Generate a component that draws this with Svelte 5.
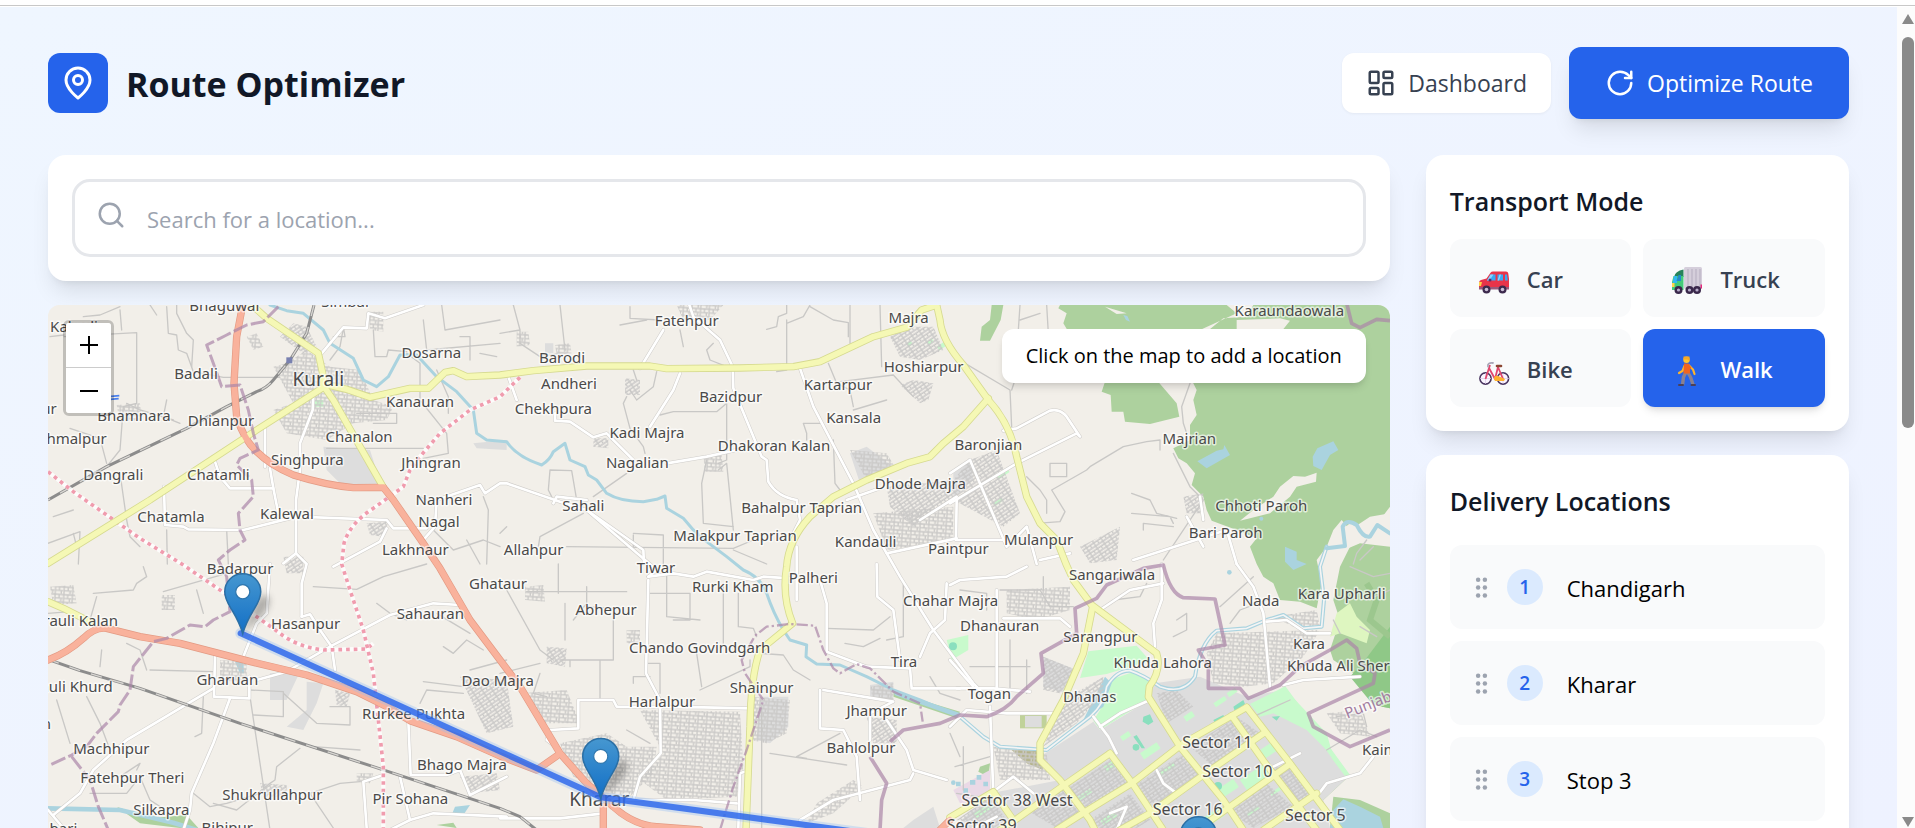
<script>
  let search = $state('');
  let mode = $state('Walk');
  const modes = ['Car', 'Truck', 'Bike', 'Walk'];
  const stops = ['Chandigarh', 'Kharar', 'Stop 3'];

  // Map geometry is in tile units, three per screen pixel.
  const primary = [
    'M608 15L590 110L582 250L590 350Q612 420 650 455Q690 495 760 525Q860 556 940 563L1030 562L1060 600L1150 730L1200 805L1290 960L1380 1080L1440 1160L1560 1360L1640 1450L1720 1520Q1780 1575 1850 1580L1980 1590',
    'M24 1080Q80 1060 130 1015Q165 980 200 985L300 1010L420 1030L620 1082L800 1125L950 1175L1050 1225L1110 1262L1250 1310L1380 1368L1490 1410L1550 1368',
    'M1690 1520L1690 1600', 'M2690 1600L2730 1560'
  ];
  const secondary = [
    'M630 10L680 55L835 160L848 220L852 260L880 300L1030 562',
    'M24 790L330 600L650 390L850 262',
    'M850 252L920 268L990 292L1110 265L1165 265L1215 217L1240 212L1280 230L1380 225L1480 212L1640 198L1830 198L1880 206L2100 204L2260 200L2340 185L2500 110L2600 82L2645 30L2690 15L2700 60Q2705 120 2770 195L2845 300Q2910 370 2930 470L2960 590L3000 670L3050 720L3078 792L3100 840L3155 915L3350 1060Q3365 1110 3328 1160L3325 1190L3420 1340L3550 1500L3610 1590',
    'M2845 295L2770 380L2710 430L2670 470L2600 490L2480 540L2380 590L2310 650Q2245 720 2240 800Q2225 890 2258 970L2160 1050Q2132 1130 2130 1280L2118 1590',
    'M3158 920L3130 1060L3070 1200L3000 1330L3000 1380L3060 1440L3150 1560L3165 1590',
    'M3620 1222L3430 1330L3275 1450L3120 1545L3050 1590',
    'M3210 1360L3070 1457L2930 1557L2880 1590', 'M3210 1360L3275 1447L3370 1590',
    'M3620 1222L3750 1390L3900 1590', 'M3575 1247L3670 1382L3770 1512L3830 1590',
    'M3675 1297L3480 1432L3330 1540L3240 1590', 'M3750 1392L3560 1527L3470 1590',
    'M3830 1480L3670 1590', 'M2730 1552L2860 1475L2920 1560', 'M24 905L70 925L150 965'
  ];
  const tertiary = [
    'M1150 15L1035 55L985 40L980 85L910 82L845 160', 'M820 280L818 330L780 430L780 510L768 600L768 760L730 790',
    'M768 760L800 792L785 850L785 950', 'M372 560L375 675L430 680L445 688L610 690L770 650L1040 660L1060 685L1160 685',
    'M520 470L540 530L570 565L700 565L690 505', 'M700 565L715 640', 'M675 370L675 500', 'M1150 720L1185 680L1190 600L1320 555L1335 580L1380 550L1400 550L1560 605L1640 630L1810 750L1812 792',
    'M1040 685L1020 725L880 800', 'M690 792L680 940L650 970L610 1070', 'M785 950L810 943L840 990L875 1040L885 1110',
    'M650 1140L740 1115L870 1040L1050 945L1180 910L1260 915', 'M525 1070L522 1190L628 1195L628 1130', 'M520 1165L260 1320L160 1410L120 1480L40 1545',
    'M570 1195L520 1330L455 1480L450 1530L430 1590', 'M1105 1262L1112 1425L1220 1425L1260 1410L1290 1485L1400 1430', 'M1030 1425L970 1445L980 1584',
    'M1080 1430L1110 1560L1180 1540L1400 1550', 'M1050 1590L1110 1560', 'M1380 1555L1560 1555L1690 1540',
    'M1948 15L1960 50L2040 120L2078 200L2080 265L2165 470L2180 480L2185 545Q2210 590 2270 600L2280 660L2260 700', 'M1870 90L1800 205', 'M1920 220L1900 270L1830 380', 'M1405 230L1430 300',
    'M1545 340L1545 362L1590 365L1660 412L1700 400L1780 480', 'M1880 490L2000 470L2090 450', 'M1540 610L1550 590L1640 600', 'M1640 630L1850 810L1825 830',
    'M2280 205L2320 320L2440 550L2500 690L2580 830L2680 990L2800 1150L2830 1180', 'M2270 740L2270 900', 'M2420 600L2520 565', 'M2730 610L2930 490L3110 400L3120 410L3080 350Q3060 325 3030 332L2930 385L2890 392',
    'M2790 480L2900 740L2960 680L2990 792', 'M2790 480L2730 520', 'M2750 600L2748 720L2890 720', 'M2640 660L2750 590', 'M2540 760L2750 715', 'M3090 760L3000 780',
    'M2730 855L2760 840L2900 830L2960 800', 'M1825 840L1818 1120L1860 1200L1862 1360L1800 1430L1780 1500', 'M1825 830L1900 820L1960 830L2000 815L2140 840L2170 830L2250 835',
    'M1530 1290L1615 1285L1615 1200L1720 1200L1730 1220L1990 1222L2130 1225', 'M1530 1290L1520 1320L1560 1350', 'M2340 840L2360 910L2360 1055L2480 1100L2610 1105L2615 1165L2760 1165', 'M2510 792L2512 890L2560 930L2580 1080', 'M2720 850L2715 960L2670 1000L2640 1070',
    'M2340 1170L2340 1285L2410 1290L2450 1370L2460 1500', 'M2350 1170L2560 1205L2490 1240L2490 1320', 'M2540 1260L2600 1350L2620 1410L2720 1440', 'M2280 1560L2380 1500L2610 1440L2620 1420', 'M2870 870L2870 1165', 'M2750 1165L2860 1165L2970 1175', 'M2730 1280L2780 1230L2900 1240L3040 1240', 'M2850 1220L2860 1480', 'M2730 1080L2800 1160', 'M2095 1584L2100 1420L2130 1410', 'M1760 1500L1960 1500L2090 1510',
    'M2890 955L3060 955L3090 980', 'M3365 792L3365 900L3340 970L3345 1040', 'M3180 930L3270 870L3370 850', 'M3590 792L3640 860L3670 940L3690 1160', 'M3680 965L3740 960L3800 1000L3870 1000', 'M3730 1155L3790 1140L3960 1130', 'M3160 1250L3205 1310L3230 1360', 'M3180 1280L3240 1240L3330 1200', 'M3830 1490L3860 1450L3960 1420L4000 1370', 'M3700 1400L3780 1360', 'M3480 590L3490 660', 'M3280 780L3560 690L3590 792', 'M3440 650L3490 740',
    'M3350 1410L3370 1450L3410 1480', 'M3210 1540L3260 1520L3230 1590', 'M2860 1475L2920 1430L2980 1480', 'M2790 1590L2870 1550', 'M24 1530L70 1584'
  ];
  const minor = [
    'M72 110L290 98L290 310L250 320L240 450L200 500', 'M130 50L180 45L240 20M240 30L245 90M330 15L350 45M380 20L385 100L410 105L415 150L440 160L460 215L550 232L720 232',
    'M30 110L72 105M440 100L460 120L455 200M440 100L410 40L410 15', 'M90 385L180 415L200 490M260 310L300 330L400 360M380 300L370 350L420 370', 'M40 650L100 630M24 730L120 695L115 792M100 700L110 740M380 690L382 792M560 690L565 792M240 520L260 660L270 710L300 740',
    'M910 85L900 140L870 180M880 110L915 110L910 80M1000 90L1005 170L1040 170L1045 150L1100 155', 'M1100 160L1140 190L1140 300L1220 400L1225 460L1150 475M1190 210L1225 290L1225 340M860 445L1150 445M950 340L1070 340L1070 370L1000 370', 'M1160 600L1140 590M1205 15L1215 90L1380 60M1150 60L1160 150L1380 130M1260 110L1290 110L1290 180M1320 160L1370 170',
    'M1180 690L1240 750L1330 720L1380 740M1280 720L1320 792M1330 590L1345 630L1340 792', 'M1420 15L1440 90L1440 130L1500 170L1560 160M1380 100L1440 90M1560 15L1575 150M1770 20L1770 55L1860 60M1920 90L1930 140M2020 130L2000 150L2010 180L2060 200M2180 88L2210 80L2215 50L2240 40L2240 15',
    'M1740 75L1820 60M2240 60L2240 210L2210 215M2240 70L2290 50L2310 15M2310 20L2380 60L2425 68L2425 110M2430 15L2430 130M2520 15L2525 200M2365 190L2390 250L2430 270L2440 320M2400 245L2560 225L2620 290', 'M1780 210L1790 240M1850 215L1840 260L1790 300L1770 270M1760 290L1750 310L1770 385L1810 440L1815 460M1860 345L1900 335L2030 335L2060 310L2060 480L2035 490',
    'M2440 330L2540 300M2290 370L2350 370M2290 370L2300 400L2300 420M2380 420L2385 550L2400 570M2035 510L2060 490L2080 690M2000 480L1985 550L1990 670L2080 680M1540 600L1525 570L1530 510L1595 512L1610 600', 'M1630 640L1500 710L1495 740M1580 740L2080 745L2140 720M1660 590L1760 520M1380 700L1400 680M2080 750L2180 792M1780 700L1870 705L1870 792M1780 705L1780 750',
    'M2750 175L2910 270L2915 380M2915 270L2925 240L2940 15M3020 15L3025 100M2940 60L3000 40M3450 250L3425 320L3430 370L3440 400M3360 450L3360 420L3320 425L3250 440L3150 500L3140 510L3035 570L3075 635L3060 665L2990 670', 'M3400 460L3450 560L3490 600L3370 780M3275 580L3330 600L3350 640L3410 655M3275 640L3390 650L3400 670M3310 690L3310 670L3400 680M2960 530L3000 570L3020 600L3020 640M3030 490L3080 490L3080 530L3030 530L3030 490',
    'M160 880L280 870L290 850L320 830L310 800M370 875L560 820M470 870L490 940M640 800L690 800M185 1050L180 1100M260 1030L300 1050L320 1110M330 1110L520 1115M170 890L150 960M24 940L90 935', 'M820 860L950 868L1030 830L1160 792M1010 910L1050 940L1100 960M1290 1110L1400 1080M1150 1145L1270 1160M1140 1210L1160 1170L1270 1180M1190 940L1240 970L1290 1000M1210 1040L1240 1060L1280 1020L1330 1050',
    'M630 1170L730 1175L730 1250L640 1245M730 1180L830 1270L930 1275L930 1220L870 1220M630 1190L690 1590M780 1345L710 1400L705 1440L690 1450L590 1530L520 1510M820 1340L960 1350M960 1445L900 1450L810 1480L880 1584M490 1190L485 1300L465 1310', 'M140 1190L180 1270L210 1350M50 1200L90 1330M290 1410L300 1390L240 1430M150 1480L260 1480L300 1430L330 1500L360 1520M460 1480L510 1520L560 1510L660 1480',
    'M1400 870L1500 1050L1540 1080M1460 875L1760 875M1555 792L1555 880M1640 860L1640 910L1600 960M1575 910L1575 1020M1640 920L1720 925L1720 1080L1560 1080M1500 1120L1480 1180L1520 1190M1590 1080L1590 1100M1680 1080L1680 1200M1380 1120L1500 1090', 'M1830 880L1950 880L1950 960L1900 960M2050 850L2050 1030M2095 880L2095 980L2140 985L2150 1010M1880 820L1880 950L1980 960M1970 1060L1985 1160M1820 1090L1860 1090L1860 1180M1780 1150L1780 1130L1830 1130M1830 1330L1760 1290',
    'M2160 1060L2230 1065L2260 1110L2310 1140M1980 1170L2130 1100L2130 1080M2165 1220L2165 1600M2190 1360L2420 1395M2400 1300L2270 1370L2300 1375M2360 985L2500 990L2550 950M2415 1030L2470 1040L2520 1015M2590 850L2590 1010L2540 1020M2670 1130L2700 1180L2760 1200', 'M2760 870L2840 880L2840 930M2880 870L3000 870L3030 920L3100 920M3010 830L3010 870M2790 1100L2970 1100M2960 1080L2960 1180M2910 1020L2910 1170M3220 900L3300 890L3320 850M3410 960L3440 940L3440 990L3400 1010M3570 970L3600 930L3680 900M3540 920L3640 830M3880 960L3900 1000M3640 1250L3750 1200M3980 900L4050 870M3960 980L4010 1010M3930 800L4000 830L4050 820',
    'M3860 1350L3960 1290L4010 1310M3890 1250L3970 1240L3980 1280M2745 1400L2850 1370M2770 1340L2770 1470M2750 1480L2880 1500M3980 720L3950 760L3940 792M3960 780L4000 740M2730 1300L2760 1370'
  ];
  const river = 'M690 15L740 32L790 40L850 90L870 130L940 175L970 240L1010 260L1045 230L1080 165L1130 165L1190 230L1250 275L1300 330L1310 400L1340 420L1400 425Q1430 470 1505 495Q1530 480 1540 455L1575 430L1590 480L1635 500L1645 525L1670 540L1700 580Q1740 605 1810 605L1850 598L1875 588L1880 625L1930 655L1960 690L2000 725L2060 770L2110 810Q2160 830 2180 880Q2200 940 2230 990L2250 1020L2300 1035L2298 1070L2330 1092L2400 1095L2480 1130L2560 1170L2640 1200L2760 1250';
  const canal = 'M2760 1250L2830 1310L2880 1340L3020 1350L3150 1250Q3195 1210 3200 1160Q3230 1110 3270 1112Q3310 1125 3360 1160Q3430 1185 3465 1130Q3480 1030 3530 992L3620 985L3680 960L3730 945L3790 985L3845 980L3852 900L3840 800L3860 740';
  const admin = 'M715 20L670 65L620 75L560 105L500 135L520 190L545 260L600 255L625 330L640 400L655 450L600 475L590 495L635 540L640 590L595 640L600 690L615 720L570 750L535 780L560 830L570 935L520 960L495 980L450 975L380 1015L340 1025L280 1100L270 1170L240 1215L235 1235L170 1300L140 1340L95 1365L30 1395M95 1370L150 1440L175 1520L205 1590';
  const admin2 = 'M2040 1590L2080 1460L2120 1350L2170 1200L2115 1120L2105 1080L2145 1007L2180 980L2250 972L2325 977L2350 1050L2380 1105L2400 1120L2450 1092L2490 1105L2560 1175L2640 1210L2648 1265';
  const admin3 = 'M2520 1590L2525 1500L2540 1450L2490 1370M2550 1325L2590 1290L2700 1270L2760 1245L2840 1250Q2900 1230 2930 1190L3010 1120L3003 1060L3110 1000L3105 925L3170 895L3200 855L3310 805L3370 795Q3390 880 3430 893L3525 897L3555 1035L3475 1050L3505 1100L3505 1165L3600 1165L3625 1195L3720 1155L3780 1100L3870 1050L3920 1020L3950 1045L3960 1090L4005 1120L4000 1150L3805 1240L3820 1280L3930 1340L4050 1290M3920 10L3935 70L3960 83L4010 58L4050 62';
  const path1 = 'M24 515L100 575L200 645L300 715L430 795L540 870L650 950L720 1000Q770 1040 850 1050L980 1047L1000 1030';
  const path2 = 'M1440 232L1380 290L1290 330L1200 400L1140 470L1110 510L1090 560L1000 625Q930 670 912 730L905 792L930 870L970 990L1000 1120L1015 1260L1030 1400L1030 1590';
  const railA = 'M822 15L800 100L750 180L700 240Q680 265 650 275L560 320L440 385L200 500L24 600';
  const railB = 'M24 1078L120 1112L300 1165L600 1270L1000 1400L1380 1525L1440 1550L1490 1590';

  // Street blocks: polygon and grid angle.
  const blocks = [
    ['740,190 800,150 870,200 960,210 1000,300 1060,320 1040,360 940,370 860,420 740,400 700,330 760,310 700,200', 'a'],
    ['620,110 650,100 670,140 640,150', 'a'], ['720,110 760,70 800,80 830,140 790,160', 'b'],
    ['985,35 1030,35 1030,95 990,90', 'a'], ['230,315 300,310 305,360 240,365', 'a'], ['980,670 1045,665 1030,710 990,705', 'b'],
    ['1430,95 1465,95 1470,135 1430,140', 'a'], ['1545,135 1590,130 1595,160 1550,165', 'a'], ['1755,235 1800,240 1800,285 1755,285', 'b'],
    ['1910,15 2050,15 2010,60 1930,60', 'a'], ['1660,415 1705,415 1705,445 1660,440', 'b'], ['1990,470 2045,465 2050,515 1995,515', 'a'],
    ['2550,110 2600,80 2680,80 2710,150 2640,180 2580,170', 'b'], ['2580,255 2620,240 2680,250 2665,300 2640,310', 'b'],
    ['2430,450 2540,460 2570,510 2480,540', 'a'], ['2540,560 2740,540 2790,480 2870,450 2940,640 2890,680 2740,600 2620,680 2550,620', 'b'],
    ['2500,640 2740,620 2740,720 2540,750', 'a'], ['3120,740 3240,680 3230,780 3150,790', 'b'], ['3430,590 3490,580 3490,640 3440,640', 'b'],
    ['1455,860 1510,855 1515,905 1455,900', 'a'], ['1760,990 1800,990 1800,1030 1760,1030', 'a'], ['1520,1040 1580,1045 1575,1100 1520,1090', 'b'],
    ['2130,1190 2250,1200 2240,1300 2180,1330 2130,1320', 'a'], ['2490,1160 2560,1150 2560,1200 2500,1200', 'a'], ['1560,1330 1700,1300 1760,1340 1850,1340 1840,1420 1760,1500 1600,1430', 'a'],
    ['1800,1230 2100,1235 2110,1400 2090,1490 1880,1500 1800,1440 1870,1360', 'a'], ['1440,1180 1580,1170 1620,1270 1500,1270', 'a'], ['1260,1130 1400,1140 1420,1280 1340,1300', 'b'],
    ['540,1080 620,1085 620,1150 540,1140', 'a'], ['30,860 100,855 110,910 40,915', 'a'], ['365,885 405,885 405,930 365,930', 'a'], ['885,1170 930,1180 920,1220 890,1215', 'b'], ['730,770 790,770 790,820 740,820', 'b'], ['950,1420 1000,1420 990,1450 950,1445', 'a'], ['1260,1430 1370,1420 1380,1470 1290,1480', 'b'], ['660,1450 740,1455 740,1490 670,1490', 'b'],
    ['2900,870 3090,860 3090,930 2990,960 2900,940', 'a'], ['3010,1070 3110,1110 3060,1180 3010,1170', 'b'], ['3010,1340 3070,1200 3190,1130 3190,1180 3110,1270', 'b'],
    ['3530,1000 3840,990 3790,1070 3700,1150 3610,1160 3520,1150 3500,1060', 'a'], ['3700,950 3830,930 3840,980 3760,980', 'a'], ['3860,1240 3960,1230 3990,1310 3900,1300', 'a'], ['2480,1250 2570,1260 2570,1330 2500,1330', 'b'],
    ['2860,1340 3020,1360 3030,1440 2880,1440', 'a'], ['3090,1460 3210,1380 3270,1450 3130,1540', 'b'], ['3280,1460 3430,1360 3480,1420 3340,1520', 'b'], ['3590,1250 3660,1300 3520,1400 3450,1340', 'b'], ['3560,1530 3680,1450 3760,1520 3640,1584', 'b'], ['3150,1560 3270,1480 3330,1560 3290,1584 3180,1584', 'b'], ['3680,1400 3750,1400 3820,1480 3770,1510', 'b'], ['2750,1560 2850,1490 2900,1560 2860,1584', 'b'], ['3350,1180 3410,1170 3460,1220 3380,1270', 'b'], ['2960,1530 3060,1460 3120,1540 3050,1584', 'b'],
    ['2440,1440 2470,1460 2380,1540 2300,1570 2330,1510', 'a']
  ];
  const labels = [
    ['Bhaguwal', 553, 32], ['Simbal', 915, 20], ['Kakrali', 102, 95], ['Badali', 468, 236], ['Dosarna', 1174, 175], ['Kanauran', 1140, 321],
    ['Bhamnara', 282, 363], ['Dhianpur', 543, 377], ['Chanalon', 957, 427], ['Singhpura', 802, 496], ['Jhingran', 1173, 505], ['Dangrali', 220, 541], ['Chatamli', 535, 541],
    ['Nanheri', 1212, 614], ['Chatamla', 393, 665], ['Kalewal', 741, 656], ['Nagal', 1197, 682], ['Lakhnaur', 1126, 766], ['Badarpur', 600, 822],
    ['Fatehpur', 1940, 77], ['Barodi', 1566, 190], ['Andheri', 1587, 266], ['Chekhpura', 1540, 341], ['Bazidpur', 2072, 306], ['Kadi Majra', 1821, 414], ['Nagalian', 1792, 505],
    ['Dhakoran Kalan', 2202, 453], ['Kartarpur', 2394, 270], ['Kansala', 2441, 368], ['Majra', 2606, 70], ['Hoshiarpur', 2651, 216], ['Sahali', 1630, 633], ['Bahalpur Taprian', 2285, 639],
    ['Malakpur Taprian', 2085, 722], ['Kandauli', 2477, 741], ['Dhode Majra', 2641, 568], ['Allahpur', 1481, 766], ['Paintpur', 2755, 761], ['Baronjian', 2845, 450],
    ['Karaundaowala', 3748, 49], ['Majrian', 3448, 431], ['Chhoti Paroh', 3664, 632], ['Bari Paroh', 3557, 713], ['Mulanpur', 2996, 735],
    ['Hasanpur', 797, 988], ['Sahauran', 1171, 957], ['Ghataur', 1374, 867], ['Gharuan', 562, 1156], ['Dao Majra', 1373, 1159], ['Rurkee Pukhta', 1121, 1258], ['Machhipur', 214, 1362],
    ['Bhago Majra', 1266, 1410], ['Fatehpur Theri', 277, 1449], ['Shukrullahpur', 697, 1500], ['Pir Sohana', 1111, 1511], ['Silkapra', 364, 1544], ['Bihipur', 562, 1600],
    ['Tiwar', 1848, 818], ['Palheri', 2320, 850], ['Rurki Kham', 2078, 877], ['Abhepur', 1698, 944], ['Chahar Majra', 2732, 918], ['Chando Govindgarh', 1979, 1060], ['Tira', 2592, 1101],
    ['Shainpur', 2165, 1180], ['Harlalpur', 1866, 1222], ['Jhampur', 2510, 1247], ['Bahlolpur', 2463, 1359], ['Sangariwala', 3216, 840], ['Nada', 3662, 919], ['Kara Upharli', 3905, 896],
    ['Dhanauran', 2879, 992], ['Sarangpur', 3181, 1026], ['Kara', 3807, 1047], ['Khuda Lahora', 3368, 1104], ['Khuda Ali Sher', 3895, 1113], ['Togan', 2848, 1197], ['Dhanas', 3149, 1206]
  ];
  const edgeLabels = [['ur', 50, 343], ['hmalpur', 200, 431], ['rauli Kalan', 234, 978], ['auli Khurd', 218, 1175], ['n', 33, 1288], ['bari', 112, 1602]];
  const sectors = [['Sector 11', 3532, 1345], ['Sector 10', 3592, 1432], ['Sector 38 West', 2931, 1517], ['Sector 16', 3443, 1546], ['Sector 39', 2825, 1592], ['Sector 5', 3826, 1564]];
  const greens = [[3300, 1360, 60, 22], [3240, 1310, 30, 16], [3520, 1210, 40, 14], [3560, 1180, 30, 14], [3430, 1250, 30, 18], [3350, 1420, 60, 14], [3600, 1440, 90, 40], [3660, 1350, 50, 30], [3530, 1470, 60, 30], [3100, 1500, 60, 12], [3190, 1400, 36, 20], [2800, 1540, 60, 18], [3180, 1560, 50, 20], [3690, 1480, 50, 10], [3620, 1540, 40, 10], [3480, 1560, 70, 30], [2870, 530, 40, 10], [2860, 610, 30, 10], [2660, 125, 18, 12], [2600, 130, 14, 12], [2690, 140, 24, 14]];
  const pins = [[608, 1003], [1682, 1497], [3475, 1732]];
</script>

{#snippet emoji(name)}
  <svg class="emoji" viewBox="0 0 32 32" aria-hidden="true">
    {#if name === 'Car'}
      <path d="M8.500 13.500 12.500 7.700Q13.400 6.500 15 6.500H28q2 0 2.300 2L31 14v10H3q-2 0-2-2v-4q0-2.500 2-3z" fill="#e8344a" />
      <path d="M12.500 9.500h5v6H9zM19.500 9.500h5.500v6h-5.500zM27 9.500h2l.8 6H27z" fill="#38a9f5" />
      <path d="M12.500 9.500h3l-4 6H9zM21.500 9.500H23l-2 6h-1.500z" fill="#8ad4ff" />
      <path d="M1 17h3l-1 4H1z" fill="#ffd147" /><path d="M1 22h30v2.500H1z" fill="#9a5a7c" />
      <circle cx="12" cy="15" r="1.500" fill="#5b2c68" />
      <g fill="#3d2a4d"><circle cx="8.500" cy="24.500" r="4" /><circle cx="24.500" cy="24.500" r="4" /></g>
      <g fill="#cabfd6"><circle cx="8.500" cy="24.500" r="1.800" /><circle cx="24.500" cy="24.500" r="1.800" /></g>
    {:else if name === 'Truck'}
      <rect x="13" y="2" width="18" height="22" rx="1.500" fill="#d5cedb" />
      <path d="M17 4v19M21 4v19M25 4v19M29 4v19" stroke="#b5adbf" stroke-width="1" />
      <path d="M12.500 4.500Q4 6 3 12h9.500z" fill="#26835b" /><path d="M2.500 11h10v14H1V17z" fill="#42cb79" />
      <path d="M3 11h3v7H1.600z" fill="#33b8f0" /><path d="M7.500 10h2.500v6H5.500z" fill="#2489c8" /><path d="M1 18h2.500v4H1z" fill="#ffd34a" />
      <path d="M29.500 19.500H31v4h-1.500z" fill="#e8287c" />
      <g fill="#3a284b"><circle cx="7.500" cy="25" r="4" /><circle cx="18.500" cy="25" r="4" /><circle cx="26" cy="25" r="4" /></g>
      <g fill="#b9aecb"><circle cx="7.500" cy="25" r="1.600" /><circle cx="18.500" cy="25" r="1.600" /><circle cx="26" cy="25" r="1.600" /></g>
    {:else if name === 'Bike'}
      <g fill="#fbf5ff" stroke="#4a3560" stroke-width="1.600"><circle cx="7.500" cy="23.500" r="5.600" /><circle cx="25" cy="23.500" r="5.600" /></g>
      <path d="M7.500 18v11M2 23.500h11M25 18v11M20 23.500h11" stroke="#d9c9e6" stroke-width=".7" />
      <path d="M7.500 24 12 10M11 13l6 11h8l-5-12-3 12" fill="none" stroke="#e0476f" stroke-width="1.800" stroke-linejoin="round" />
      <path d="M10 11.500q-1-4 5-3.500" fill="none" stroke="#a9a6b8" stroke-width="1.800" stroke-linecap="round" />
      <path d="M19 11h4" stroke="#8b4632" stroke-width="2.600" stroke-linecap="round" />
      <path d="M16 24q0-4 4-3l7 3-1 2h-9z" fill="#ffb12f" />
    {:else}
      <path d="M16 15 12.500 22l-1 8M16 16l3.500 6 2.500 7.500" fill="none" stroke="#8a8190" stroke-width="3.400" stroke-linejoin="round" />
      <path d="M8 30h4M20.500 30h3.500" stroke="#4b4058" stroke-width="2" stroke-linecap="round" />
      <path d="M18 10.500l4 4 1.500 4.500M13.500 11l-2 5-3.500 2" fill="none" stroke="#ffb52a" stroke-width="2.200" stroke-linecap="round" />
      <path d="M13 8.500h4.500l3 4.500-1.500 1.500v4h-6.500z" fill="#f0641e" />
      <circle cx="15.500" cy="4.800" r="3.200" fill="#ffc62e" /><path d="M12.500 1.500h6v4.500l-2-1.500h-4z" fill="#f9a825" />
    {/if}
  </svg>
{/snippet}

<div class="window">
  <div class="edge"></div>
  <div class="view">
    <main>
      <header>
        <div class="brand">
          <span class="logo">
            <svg class="line" width="36" height="36" viewBox="0 0 24 24" aria-hidden="true"><path d="M20 10c0 6-8 12-8 12s-8-6-8-12a8 8 0 0 1 16 0Z" /><circle cx="12" cy="10" r="3" /></svg>
          </span>
          <h1>Route Optimizer</h1>
        </div>
        <nav>
          <button class="dash">
            <svg class="line" width="30" height="30" viewBox="0 0 24 24" aria-hidden="true"><rect x="3" y="3" width="7" height="9" rx="1" /><rect x="14" y="3" width="7" height="5" rx="1" /><rect x="14" y="12" width="7" height="9" rx="1" /><rect x="3" y="16" width="7" height="5" rx="1" /></svg>
            Dashboard
          </button>
          <button class="optimize">
            <svg class="line" width="30" height="30" viewBox="0 0 24 24" aria-hidden="true"><path d="M21 12a9 9 0 1 1-9-9c2.520 0 4.930 1 6.740 2.740L21 8" /><path d="M21 3v5h-5" /></svg>
            Optimize Route
          </button>
        </nav>
      </header>

      <div class="columns">
        <div class="left">
          <section class="card">
            <label class="search">
              <svg class="line" width="30" height="30" viewBox="0 0 24 24" aria-hidden="true"><circle cx="11" cy="11" r="8" /><path d="m21 21-4.300-4.300" /></svg>
              <input type="text" bind:value={search} placeholder="Search for a location..." aria-label="Search for a location" />
            </label>
          </section>

          <section class="map">
            <svg class="tiles" viewBox="24 15 4026 1569" preserveAspectRatio="xMinYMin slice">
              <defs>
                <pattern id="ga" width="26" height="23" patternUnits="userSpaceOnUse" patternTransform="rotate(4)"><path d="M0 3H26M3 0V23M15 3V14M3 14H26M21 14V23" fill="none" stroke="#cac9c7" stroke-width="4" /></pattern>
                <pattern id="gb" width="26" height="20" patternUnits="userSpaceOnUse" patternTransform="rotate(-34)"><path d="M0 3H26M3 0V20M0 12H26M16 12V20" fill="none" stroke="#c9c8c7" stroke-width="4" /></pattern>
                <linearGradient id="pin" x1="0" y1="0" x2="0" y2="1"><stop offset="0" stop-color="#4697d0" /><stop offset="1" stop-color="#126fc6" /></linearGradient>
                <filter id="soft" x="-50%" y="-50%" width="200%" height="200%"><feGaussianBlur stdDeviation="2.500" /></filter>
              </defs>
              <rect x="24" y="15" width="4026" height="1569" fill="#f2efe9" />

              <g fill="#add19e">
                <path d="M3060 15H4050V640L3990 650L3930 690L3905 660L3880 690L3860 740L3830 780L3845 850L3830 925L3780 905L3720 900L3700 850L3670 830L3650 792L3630 740L3650 715L3590 690L3515 662L3500 630L3490 590L3455 555L3465 520L3440 490L3415 475L3400 445L3450 420L3450 375L3470 345L3460 300L3470 270L3455 240L3470 180L3400 100L3085 95L3070 70L3080 40L3055 25Z" />
                <path d="M3200 230L3350 240L3410 310L3418 350L3330 372L3255 365L3250 335L3215 335L3212 285L3185 275Z" />
                <path d="M2855 15H2890L2882 60L2850 122H2820L2825 80L2850 60Z" />
                <path d="M3900 800L3930 740L4050 690V1225L4000 1215L3960 1150L3940 1120L3880 1080L3870 1050L3900 960L3880 900Z" />
                <path d="M3735 1330L3775 1340L3800 1400L3850 1370L3880 1360L3925 1430L3850 1500L3810 1490L3780 1440L3750 1390Z" />
                <path d="M3880 1490L3960 1500L4050 1540V1584H3870Z" />
                <path d="M2820 1400L2850 1390L2845 1430L2815 1415Z" />
                <path d="M2560 1175L2760 1235L2750 1255L2560 1190ZM230 1520L330 1555L440 1545L475 1584H420L300 1570Z M1190 1575L1240 1568L1250 1584Z" />
              </g>
              <path d="M3975 1080L4050 980V1225L4000 1215L3930 1130Z" fill="#8fc887" />
              <path d="M3980 850L4010 900L3990 960L4050 1010" fill="none" stroke="#9cc78e" stroke-width="18" />
              <path d="M3890 940L3930 910L3950 950L3990 990L3980 1030L3900 1000L3870 1010Z" fill="#def6c0" />
              <g fill="#f2efe9">
                <path d="M3500 95L3550 55L3620 50L3640 15H3560L3590 40L3480 90Z" /><path d="M3590 60L3720 55L3750 62L3720 100L3590 95ZM3195 20L3260 40L3230 42Z" />
                <path d="M3720 560L3760 528L3795 530L3830 518L3828 545L3770 560L3750 590L3690 640L3600 662L3640 630L3700 590Z" />
                <path d="M3905 690L3930 670L3990 700L4050 620V740L3960 730L3890 760L3850 830L3850 760Z" />
              </g>
              <g fill="#c8facc">
                <path d="M3145 1054L3290 1037L3330 1082L3200 1122L3120 1134Z" /><path d="M3210 1140L3290 1112L3345 1145L3325 1200L3180 1290L3160 1262L3205 1190Z" />
                <path d="M2720 1020L2785 1005L2785 1050L2735 1080Z" /><path d="M820 300L850 300L850 320L825 320Z" />
              </g>
              <g fill="#dddddd">
                <path d="M3345 1150L3480 1130L3620 1190L3730 1170L3925 1430L3850 1500L3870 1584H2740L2850 1480L3060 1440L3000 1370L3160 1265L3180 1290L3320 1205Z" />
                <path d="M850 440L990 450L1025 560L900 550L860 510ZM1300 430L1400 420V450L1310 445ZM2430 460L2480 440L2560 500L2540 520L2460 550ZM690 1120L780 1115L740 1200L690 1200ZM800 1145L850 1150L830 1210L790 1290L740 1280L800 1230ZM1515 130H1540V160H1515ZM3010 1070L3110 1110L3080 1180L3010 1160ZM2740 520L2790 480L2800 540L2740 590ZM2490 1155L2560 1145V1200L2490 1195ZM2160 1190H2245V1280L2190 1330L2150 1320ZM2620 1560L2680 1520L2700 1584H2590Z" />
              </g>
              <g fill="#c8facc">
                <path d="M3630 1212L3730 1162L3860 1300L3880 1370L3800 1290L3700 1240L3660 1250Z" />
                {#each greens as g}<rect x={g[0]} y={g[1]} width={g[2]} height={g[3]} transform={`rotate(-34 ${g[0]} ${g[1]})`} />{/each}
              </g>
              <path d="M3730 1162L3925 1430L3880 1370" fill="#c8facc" stroke="#c8facc" stroke-width="14" />
              <path d="M2915 1350L3000 1352L3010 1410L2960 1390Z" fill="#b5b48d" />
              <path d="M2740 1470L2850 1410L2850 1500L2760 1510Z" fill="#ead9e6" />
              <path d="M2940 1245H3020V1285H2940Z" fill="#c0d29a" /><path d="M2955 1248H3005V1282H2955Z" fill="#ddd" />
              <g fill="#8adfbe"><circle cx="2739" cy="1039" r="12" /><path d="M3310 1250L3330 1243L3340 1265L3325 1275L3308 1265ZM3280 1310L3290 1305L3315 1345L3305 1345ZM3520 1260L3550 1245L3555 1255L3525 1270ZM3580 1220L3610 1200L3615 1212L3585 1235ZM3695 1250L3720 1248L3710 1262Z" /><circle cx="3288" cy="1342" r="10" /><circle cx="3534" cy="1458" r="12" /></g>
              <g fill="#aad3df">
                <path d="M3472 484L3530 452L3550 448L3553 435L3570 465L3500 505ZM3818 470L3832 445L3880 424L3895 450L3870 465L3845 510L3820 498ZM3250 45L3262 48L3270 65L3258 60ZM3735 740L3770 755L3770 780L3800 792L3760 810L3735 785Z" />
                <path d="M3880 1530L3910 1498L3960 1520L4020 1550L4030 1584H3870ZM585 1085L610 1082L612 1120L600 1120ZM1245 1520L1290 1515L1270 1545L1235 1545ZM3160 1200L3195 1130L3215 1150L3190 1220L3130 1260Z" />
                <path d="M2748 1445h14v14h-14zM2770 1465h14v14h-14zM2790 1440h16v14h-16zM2810 1425h14v14h-14zM2830 1445h14v14h-14z" />
                <circle cx="3664" cy="656" r="6" /><circle cx="3568" cy="817" r="7" /><circle cx="2740" cy="1448" r="7" />
              </g>

              {#each blocks as b}<polygon points={b[0]} fill={`url(#g${b[1]})`} />{/each}
              <g class="roads">
                {#each minor as d}<path {d} stroke="#c9c8c6" stroke-width="4" />{/each}
                <path d={river} stroke="#aad3df" stroke-width="9" /><path d={canal} stroke="#aad3df" stroke-width="12" />
                <path d={canal} stroke="#f4f4f4" stroke-width="5" />
                <path d="M3860 745L3915 738L3908 680Q3920 655 3950 675Q3970 715 3990 710L4012 675L4050 700" stroke="#aad3df" stroke-width="12" />
                <path d="M24 1525L240 1530L400 1568L470 1590M2570 1180L2755 1245" stroke="#aad3df" stroke-width="14" />
                {#each tertiary as d}<path {d} stroke="#cfcdca" stroke-width="11" />{/each}
                {#each tertiary as d}<path {d} stroke="#fff" stroke-width="8" />{/each}
                <g stroke-linecap="butt">
                  {#each [railA, railB] as d}<path {d} stroke="#8c8c8c" stroke-width="9" /><path {d} stroke="#d8d6d2" stroke-width="4" stroke-dasharray="34 34" />{/each}
                  {#each [path1, path2] as d}<path {d} stroke="#fff" stroke-width="13" opacity=".8" /><path {d} stroke="#f09cae" stroke-width="11" stroke-dasharray="11 12" />{/each}
                </g>
                {#each secondary as d}<path {d} stroke="#d6da90" stroke-width="22" />{/each}
                {#each primary as d}<path {d} stroke="#e39a83" stroke-width="22" />{/each}
                {#each secondary as d}<path {d} stroke="#f5f8b5" stroke-width="17" />{/each}
                {#each primary as d}<path {d} stroke="#f9b29c" stroke-width="18" />{/each}
                <g stroke="#ab86a8" stroke-linecap="butt" opacity=".7">
                  <path d={admin} stroke-width="9" stroke-dasharray="46 10" /><path d={admin2} stroke-width="7" stroke-dasharray="34 9 7 9" /><path d={admin3} stroke-width="11" />
                </g>
              </g>
              <rect x="739" y="172" width="18" height="18" fill="#7981b0" />
              <path d="M205 290L238 287M210 298L236 296" stroke="#4a80ee" stroke-width="5" />

              <g class="names">
                {#each labels as l}<text x={l[1]} y={l[2]}>{l[0]}</text>{/each}
                {#each edgeLabels as l}<text x={l[1]} y={l[2]} text-anchor="end">{l[0]}</text>{/each}
                <g class="sector">{#each sectors as l}<text x={l[1]} y={l[2]}>{l[0]}</text>{/each}</g>
                <g class="town"><text x="835" y="257">Kurali</text><text x="1678" y="1517">Kharar</text></g>
                <text x="3966" y="1366" text-anchor="start">Kaimbwala</text>
                <text class="state" x="3922" y="1256" text-anchor="start" transform="rotate(-22 3922 1256)">Punjab</text>
              </g>

              <g class="roads">
                <path d="M602 1000L1682 1492L3475 1734" stroke="#93bdf5" stroke-width="32" opacity=".35" />
                <path d="M602 1000L1682 1492L3475 1734" stroke="#2563eb" stroke-width="18" opacity=".8" />
              </g>
              {#each pins as p}
                <g transform={`translate(${p[0] - 56} ${p[1] - 184}) scale(4.500)`}>
                  <path d="M12.500 41 19 24Q24 13 29 15Q33 20 25 29Z" fill="#333" opacity=".35" filter="url(#soft)" />
                  <path d="M12.500.5C5.800.5.5 5.800.5 12.500c0 5 2.500 8.300 5 12.500 2.800 4.700 5.400 9.500 7 15.500 1.600-6 4.200-10.800 7-15.500 2.500-4.200 5-7.500 5-12.500C24.500 5.800 19.200.5 12.500.5Z" fill="url(#pin)" stroke="#2b6fa5" />
                  <circle cx="12.500" cy="12.500" r="4.700" fill="#fff" stroke="#2f76ad" stroke-width=".8" />
                </g>
              {/each}
            </svg>
            <div class="zoom">
              <button aria-label="Zoom in"><svg width="20" height="20" viewBox="0 0 20 20"><path d="M10 1v18M1 10h18" /></svg></button>
              <button aria-label="Zoom out"><svg width="20" height="20" viewBox="0 0 20 20"><path d="M1 10h18" /></svg></button>
            </div>
            <p class="hint">Click on the map to add a location</p>
          </section>
        </div>

        <aside>
          <section class="card">
            <h2>Transport Mode</h2>
            <div class="modes">
              {#each modes as m}
                <button class:active={mode === m} aria-pressed={mode === m} onclick={() => (mode = m)}>{@render emoji(m)}{m}</button>
              {/each}
            </div>
          </section>
          <section class="card stops">
            <h2>Delivery Locations</h2>
            <ol>
              {#each stops as stop, i}
                <li>
                  <svg width="27" height="27" viewBox="0 0 24 24" fill="#9ca3af" aria-hidden="true">{#each [5, 12, 19] as cy}<circle cx="9" {cy} r="2" /><circle cx="15" {cy} r="2" />{/each}</svg>
                  <span class="num">{i + 1}</span>
                  <span class="stop">{stop}</span>
                </li>
              {/each}
            </ol>
          </section>
        </aside>
      </div>
    </main>
    <div class="scrollbar" aria-hidden="true">
      <svg width="14" height="12" viewBox="0 0 14 12"><path d="M7 1 13 11H1Z" /></svg>
      <div class="thumb"></div>
      <svg width="14" height="12" viewBox="0 0 14 12"><path d="M7 11 13 1H1Z" /></svg>
    </div>
  </div>
</div>

<style>
  :global(body) { margin: 0; overflow: hidden; }
  * { box-sizing: border-box; }
  .window { height: 100vh; display: flex; flex-direction: column; background: #fff; font-family: "Open Sans", "Noto Sans", sans-serif; font-size: 22px; color: #000; }
  .edge { height: 7px; flex: none; border-top: 5px solid #fff; background: #c8c8c8; border-bottom: 1px solid #fff; }
  .view { flex: 1; min-height: 0; display: flex; }
  main { flex: 1; min-width: 0; display: flex; flex-direction: column; padding: 40px 48px 0; overflow: hidden; background: linear-gradient(to bottom right, #eff6ff, #eef2ff); }
  button { font: inherit; border: 0; cursor: pointer; display: flex; align-items: center; }
  h1, h2, p, ol { margin: 0; padding: 0; }
  .line { fill: none; stroke: currentColor; stroke-width: 2; stroke-linecap: round; stroke-linejoin: round; flex: none; }
  header { display: flex; justify-content: space-between; align-items: center; margin-bottom: 36px; }
  .brand { display: flex; align-items: center; gap: 18px; }
  .logo { width: 60px; height: 60px; display: grid; place-items: center; border-radius: 12px; background: #2563eb; color: #fff; }
  h1 { padding-top: 2px; font-size: 34px; line-height: 48px; font-weight: 700; color: #111827; }
  nav { display: flex; align-items: center; gap: 18px; font-size: 23px; }
  .dash, .optimize { gap: 12px; border-radius: 12px; }
  .dash { height: 60px; padding: 0 24px; background: #fff; color: #374151; box-shadow: 0 1px 3px rgba(0, 0, 0, .05); }
  .optimize { height: 72px; padding: 0 36px; background: #2563eb; color: #fff; box-shadow: 0 15px 22px -5px rgba(0, 0, 0, .1), 0 6px 9px -6px rgba(0, 0, 0, .1); }
  .columns { flex: 1; min-height: 0; display: grid; grid-template-columns: repeat(4, minmax(0, 1fr)); gap: 36px; }
  .left { grid-column: span 3; display: flex; flex-direction: column; gap: 24px; min-height: 0; }
  aside { display: flex; flex-direction: column; gap: 24px; min-height: 0; }
  .card { flex: none; padding: 24px; border-radius: 18px; background: #fff; box-shadow: 0 15px 22px -5px rgba(0, 0, 0, .1), 0 6px 9px -6px rgba(0, 0, 0, .1); }
  .search { display: block; position: relative; }
  .search svg { position: absolute; left: 24px; top: 21px; color: #9ca3af; }
  input { display: block; width: 100%; height: 78px; padding: 2px 24px 0 72px; border: 3px solid #e5e7eb; border-radius: 18px; font: inherit; color: #111827; outline: 0; }
  input::placeholder { color: #9ca3af; opacity: 1; }
  .map { flex: 1; min-height: 0; position: relative; overflow: hidden; border-radius: 12px 12px 0 0; background: #f2efe9; }
  .tiles { display: block; width: 100%; height: 100%; }
  .roads { fill: none; stroke-linejoin: round; stroke-linecap: round; }
  .names { font-family: "Noto Sans", sans-serif; font-size: 45px; fill: #4a4a4a; stroke: rgba(255, 255, 255, .65); stroke-width: 9px; stroke-linejoin: round; paint-order: stroke; text-anchor: middle; }
  .sector { font-size: 48px; }
  .town { font-size: 57px; }
  .state { fill: #a27ca0; }
  .zoom { position: absolute; left: 15px; top: 15px; border: 3px solid rgba(0, 0, 0, .2); border-radius: 6px; background-clip: padding-box; }
  .zoom button { width: 45px; height: 45px; padding: 0; justify-content: center; background: #fff; border-radius: 0 0 3px 3px; }
  .zoom button:first-child { border-bottom: 1px solid #ccc; border-radius: 3px 3px 0 0; }
  .zoom path { stroke: #000; stroke-width: 2; }
  .hint { position: absolute; right: 24px; top: 24px; padding: 12px 24px; border-radius: 12px; background: #fff; font-size: 20px; line-height: 30px; box-shadow: 0 6px 9px -2px rgba(0, 0, 0, .12), 0 3px 6px -3px rgba(0, 0, 0, .1); }
  h2 { padding-top: 2px; font-size: 25px; line-height: 40px; font-weight: 600; color: #111827; }
  .modes { display: grid; grid-template-columns: 1fr 1fr; gap: 12px; margin-top: 18px; }
  .modes button { height: 78px; padding: 2px 28px 0; gap: 17px; border-radius: 12px; background: #f9fafb; color: #374151; font-weight: 600; }
  .modes .active { background: #2563eb; color: #fff; box-shadow: 0 6px 9px -2px rgba(0, 0, 0, .1), 0 3px 6px -3px rgba(0, 0, 0, .1); }
  .emoji { width: 32px; height: 32px; margin-top: 4px; flex: none; }
  ol { list-style: none; margin-top: 24px; display: flex; flex-direction: column; gap: 12px; }
  li { display: flex; align-items: center; height: 84px; padding: 0 18px; border-radius: 12px; background: #f9fafb; }
  .num { width: 36px; height: 36px; margin: 0 24px 0 12px; display: grid; place-items: center; border-radius: 50%; background: #dbeafe; color: #2563eb; font-size: 19px; font-weight: 600; }
  .stop { padding-top: 2px; }
  .scrollbar { width: 18px; flex: none; display: flex; flex-direction: column; align-items: center; padding: 6px 0 0 3px; background: #fcfcfc; }
  .scrollbar svg { flex: none; fill: #8a8a8a; }
  .thumb { width: 12px; height: 48%; margin: 12px 0 auto; border-radius: 6px; background: #8a8a8a; }
</style>
